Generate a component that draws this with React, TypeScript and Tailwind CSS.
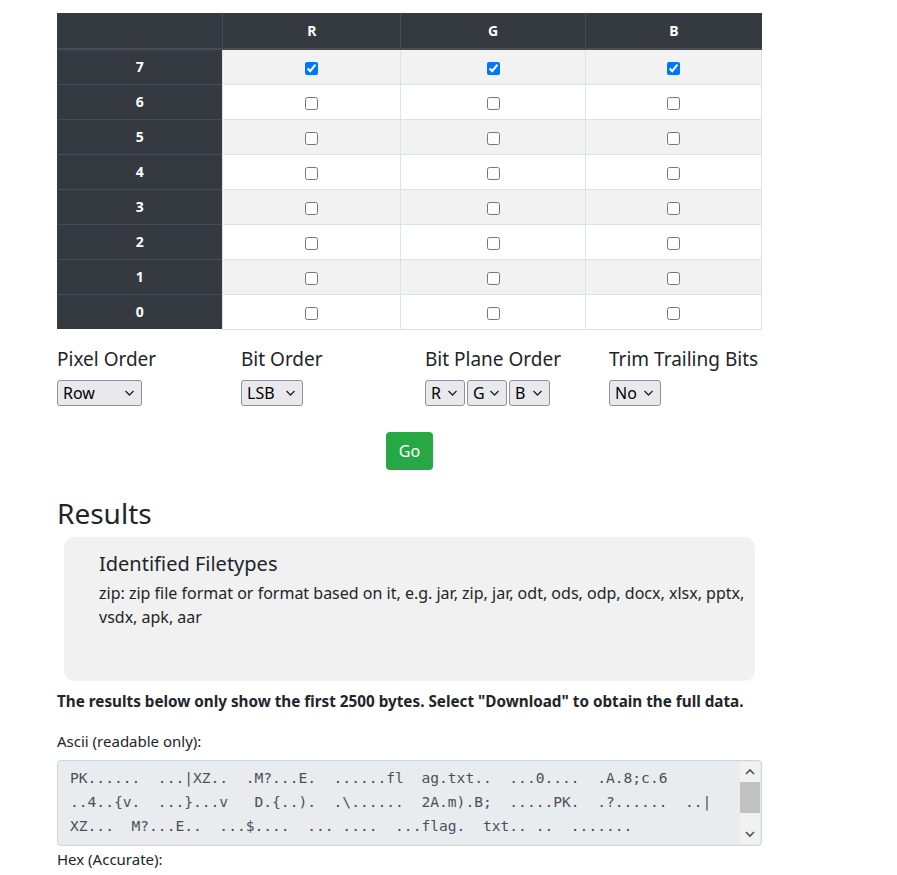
import React from "react";

const ROWS = [7, 6, 5, 4, 3, 2, 1, 0];

const ASCII_LINES = [
  "PK......  ...|XZ..  .M?...E.  ......fl  ag.txt..  ...0....  .A.8;c.6",
  "..4..{v.  ...}...v   D.{..).  .\\......  2A.m).B;  .....PK.  .?......  ..|",
  "XZ...  M?...E..  ...$....  ... ....  ...flag.  txt.. ..  .......",
];

function Chevron() {
  return (
    <svg width="11" height="8" viewBox="0 0 11 8" className="shrink-0">
      <path d="M1.5 2 L5.5 6 L9.5 2" fill="none" stroke="#222" strokeWidth="1.3" />
    </svg>
  );
}

function FakeSelect({ value, width }: { value: string; width: string }) {
  return (
    <div
      className={`inline-flex h-[26px] items-center justify-between rounded-[3px] border border-[#8f8f9d] bg-[#e9e9ed] pl-[5px] pr-[6px] text-[16px] text-black ${width}`}
    >
      <span>{value}</span>
      <Chevron />
    </div>
  );
}

function Field({ label, children }: { label: string; children: React.ReactNode }) {
  return (
    <div className="flex flex-col">
      <div className="text-[19px] leading-[24px] text-[#212529]">{label}</div>
      <div className="mt-[9px] flex gap-[2px]">{children}</div>
    </div>
  );
}

export default function App() {
  return (
    <div className="min-h-screen bg-white font-['Noto_Sans',sans-serif] text-[#212529]">
      <div className="ml-[57px] w-[705px] pt-[13px]">
        <table className="w-full border-collapse text-[14px]">
          <colgroup>
            <col className="w-[166px]" />
            <col className="w-[178px]" />
            <col className="w-[185px]" />
            <col className="w-[176px]" />
          </colgroup>
          <thead>
            <tr className="h-[36px] bg-[#343a40] font-bold text-white">
              <th className="border-b-2 border-[#454d55]"></th>
              <th className="border-b-2 border-l border-[#454d55]">R</th>
              <th className="border-b-2 border-l border-[#454d55]">G</th>
              <th className="border-b-2 border-l border-[#454d55]">B</th>
            </tr>
          </thead>
          <tbody>
            {ROWS.map((n, i) => (
              <tr key={n} className={`h-[35px] ${i % 2 === 0 ? "bg-[#f2f2f2]" : "bg-white"}`}>
                <th className="border-t border-[#454d55] bg-[#343a40] font-bold text-white">{n}</th>
                {["r", "g", "b"].map((c) => (
                  <td key={c} className="border border-[#dee2e6] text-center align-middle">
                    <input
                      type="checkbox"
                      defaultChecked={n === 7}
                      className="m-0 h-[13px] w-[13px] align-middle"
                    />
                  </td>
                ))}
              </tr>
            ))}
          </tbody>
        </table>

        <div className="mt-[17px] grid grid-cols-[184px_184px_184px_184px]">
          <Field label="Pixel Order">
            <FakeSelect value="Row" width="w-[85px]" />
          </Field>
          <Field label="Bit Order">
            <FakeSelect value="LSB" width="w-[62px]" />
          </Field>
          <Field label="Bit Plane Order">
            <FakeSelect value="R" width="w-[40px]" />
            <FakeSelect value="G" width="w-[40px]" />
            <FakeSelect value="B" width="w-[41px]" />
          </Field>
          <Field label="Trim Trailing Bits">
            <FakeSelect value="No" width="w-[52px]" />
          </Field>
        </div>

        <div className="mt-[26px] flex justify-center">
          <button className="h-[38px] w-[47px] rounded-[4px] bg-[#28a745] text-[16px] text-white">
            Go
          </button>
        </div>

        <h3 className="mt-[26px] text-[28px] leading-[34px] font-normal">Results</h3>

        <div className="mx-[7px] mt-[7px] h-[144px] rounded-[10px] bg-[#f1f1f1] pl-[35px] pr-[4px] pt-[13px]">
          <div className="text-[20px] leading-[28px]">Identified Filetypes</div>
          <p className="mt-[3px] text-[16px] leading-[24px]">
            zip: zip file format or format based on it, e.g. jar, zip, jar, odt, ods, odp, docx, xlsx, pptx, vsdx, apk, aar
          </p>
        </div>

        <p className="mt-[9px] text-[15.25px] leading-[22px] font-bold">
          The results below only show the first 2500 bytes. Select "Download" to obtain the full data.
        </p>

        <div className="mt-[18px] text-[15px] leading-[22px]">Ascii (readable only):</div>

        <div className="mt-[8px] flex h-[86px] rounded-[4px] border border-[#ced4da] bg-[#e9ecef]">
          <div className="flex-1 overflow-hidden px-[12px] pt-[5px] font-['DejaVu_Sans_Mono',monospace] text-[14.6px] leading-[24px] text-[#495057]">
            {ASCII_LINES.map((l, i) => (
              <div key={i} className="whitespace-pre">
                {l}
              </div>
            ))}
          </div>
          <div className="my-[1px] mr-[1px] flex w-[20px] flex-col items-center bg-[#f1f1f1]">
            <div className="flex h-[20px] flex-none items-center">
              <svg width="12" height="8" viewBox="0 0 12 8">
                <path d="M2 6 L6 2 L10 6" fill="none" stroke="#505050" strokeWidth="1.6" />
              </svg>
            </div>
            <div className="h-[31px] w-full flex-none bg-[#c1c1c1]" />
            <div className="flex-1" />
            <div className="flex h-[20px] flex-none items-center">
              <svg width="12" height="8" viewBox="0 0 12 8">
                <path d="M2 2 L6 6 L10 2" fill="none" stroke="#505050" strokeWidth="1.6" />
              </svg>
            </div>
          </div>
        </div>

        <div className="mt-[2px] text-[15px] leading-[22px]">Hex (Accurate):</div>
      </div>
    </div>
  );
}
